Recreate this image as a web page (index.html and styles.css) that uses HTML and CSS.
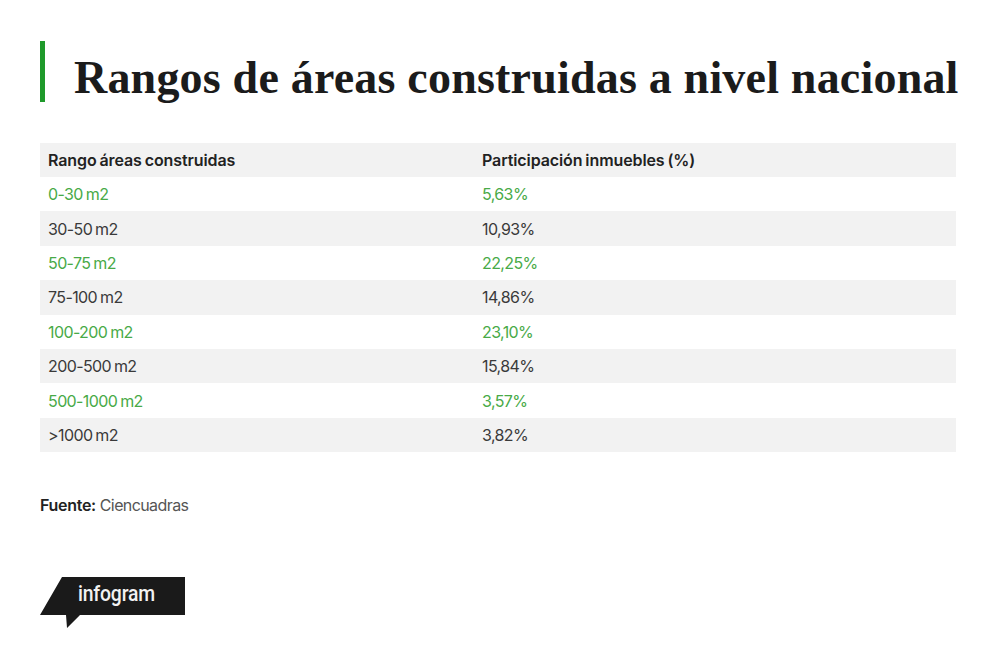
FILE: index.html
```html
<!DOCTYPE html>
<html lang="es">
<head>
<meta charset="utf-8">
<link rel="stylesheet" href="styles.css">
</head>
<body>
<div class="page">
  <div class="title-block">
    <h1 class="title">Rangos de áreas construidas a nivel nacional</h1>
  </div>
  <div class="table">
    <div class="row head"><div class="cell">Rango áreas construidas</div><div class="cell c2">Participación inmuebles (%)</div></div>
    <div class="row green"><div class="cell">0-30 m2</div><div class="cell c2">5,63%</div></div>
    <div class="row gray"><div class="cell">30-50 m2</div><div class="cell c2">10,93%</div></div>
    <div class="row green"><div class="cell">50-75 m2</div><div class="cell c2">22,25%</div></div>
    <div class="row gray"><div class="cell">75-100 m2</div><div class="cell c2">14,86%</div></div>
    <div class="row green"><div class="cell">100-200 m2</div><div class="cell c2">23,10%</div></div>
    <div class="row gray"><div class="cell">200-500 m2</div><div class="cell c2">15,84%</div></div>
    <div class="row green"><div class="cell">500-1000 m2</div><div class="cell c2">3,57%</div></div>
    <div class="row gray"><div class="cell">&gt;1000 m2</div><div class="cell c2">3,82%</div></div>
  </div>
  <p class="source"><b>Fuente:</b> Ciencuadras</p>
  <div class="logo">
    <svg class="logo-shape" width="146" height="52" viewBox="0 0 146 52">
      <polygon points="22,0 145,0 145,38 40,38 27,51 26,38 0,38" fill="#1a1a1a"/>
    </svg>
    <span class="logo-text">infogram</span>
  </div>
</div>
</body>
</html>
```
FILE: styles.css
```css
html, body {
  margin: 0;
  padding: 0;
  background: #ffffff;
}
.page {
  padding: 41px 0 0 40px;
  width: 916px;
  font-family: Inter, "Noto Sans", sans-serif;
}
.title-block {
  border-left: 5px solid #1f9a2b;
  height: 61px;
  display: flex;
  align-items: flex-start;
  padding-left: 29px;
}
.title {
  margin: 13.5px 0 0 0;
  font-family: "Liberation Serif", serif;
  font-weight: bold;
  font-size: 46px;
  line-height: 46px;
  letter-spacing: 0.2px;
  color: #1b1b1b;
  white-space: nowrap;
}
.table {
  margin-top: 41px;
  width: 916px;
}
.row {
  display: flex;
  height: 34.4px;
  align-items: stretch;
  font-size: 16px;
  letter-spacing: -0.6px;
  word-spacing: -1px;
}
.row.head {
  height: 34px;
  background: #f2f2f2;
  font-weight: 600;
  letter-spacing: -0.1px;
  color: #222;
}
.row.green {
  background: #ffffff;
  color: #48aa47;
}
.row.gray {
  background: #f2f2f2;
  color: #3a3a3a;
}
.cell {
  width: 430px;
  display: flex;
  align-items: center;
  padding-left: 8px;
  box-sizing: border-box;
}
.cell.c2 {
  width: 484px;
  margin-left: 2px;
  padding-left: 10px;
}
.source {
  margin: 43px 0 0 0;
  font-size: 16px;
  letter-spacing: -0.6px;
  color: #555;
}
.source b {
  font-weight: 600;
  letter-spacing: -0.3px;
  color: #222;
}
.logo {
  margin-top: 62px;
  position: relative;
  width: 146px;
  height: 52px;
}
.logo-shape {
  display: block;
}
.logo-text {
  position: absolute;
  left: 38px;
  top: 4px;
  font-family: Roboto, "Noto Sans", sans-serif;
  font-weight: 500;
  font-size: 22px;
  color: #f2f2f2;
  letter-spacing: -0.2px;
  transform: scaleX(0.88);
  transform-origin: left center;
}
```
